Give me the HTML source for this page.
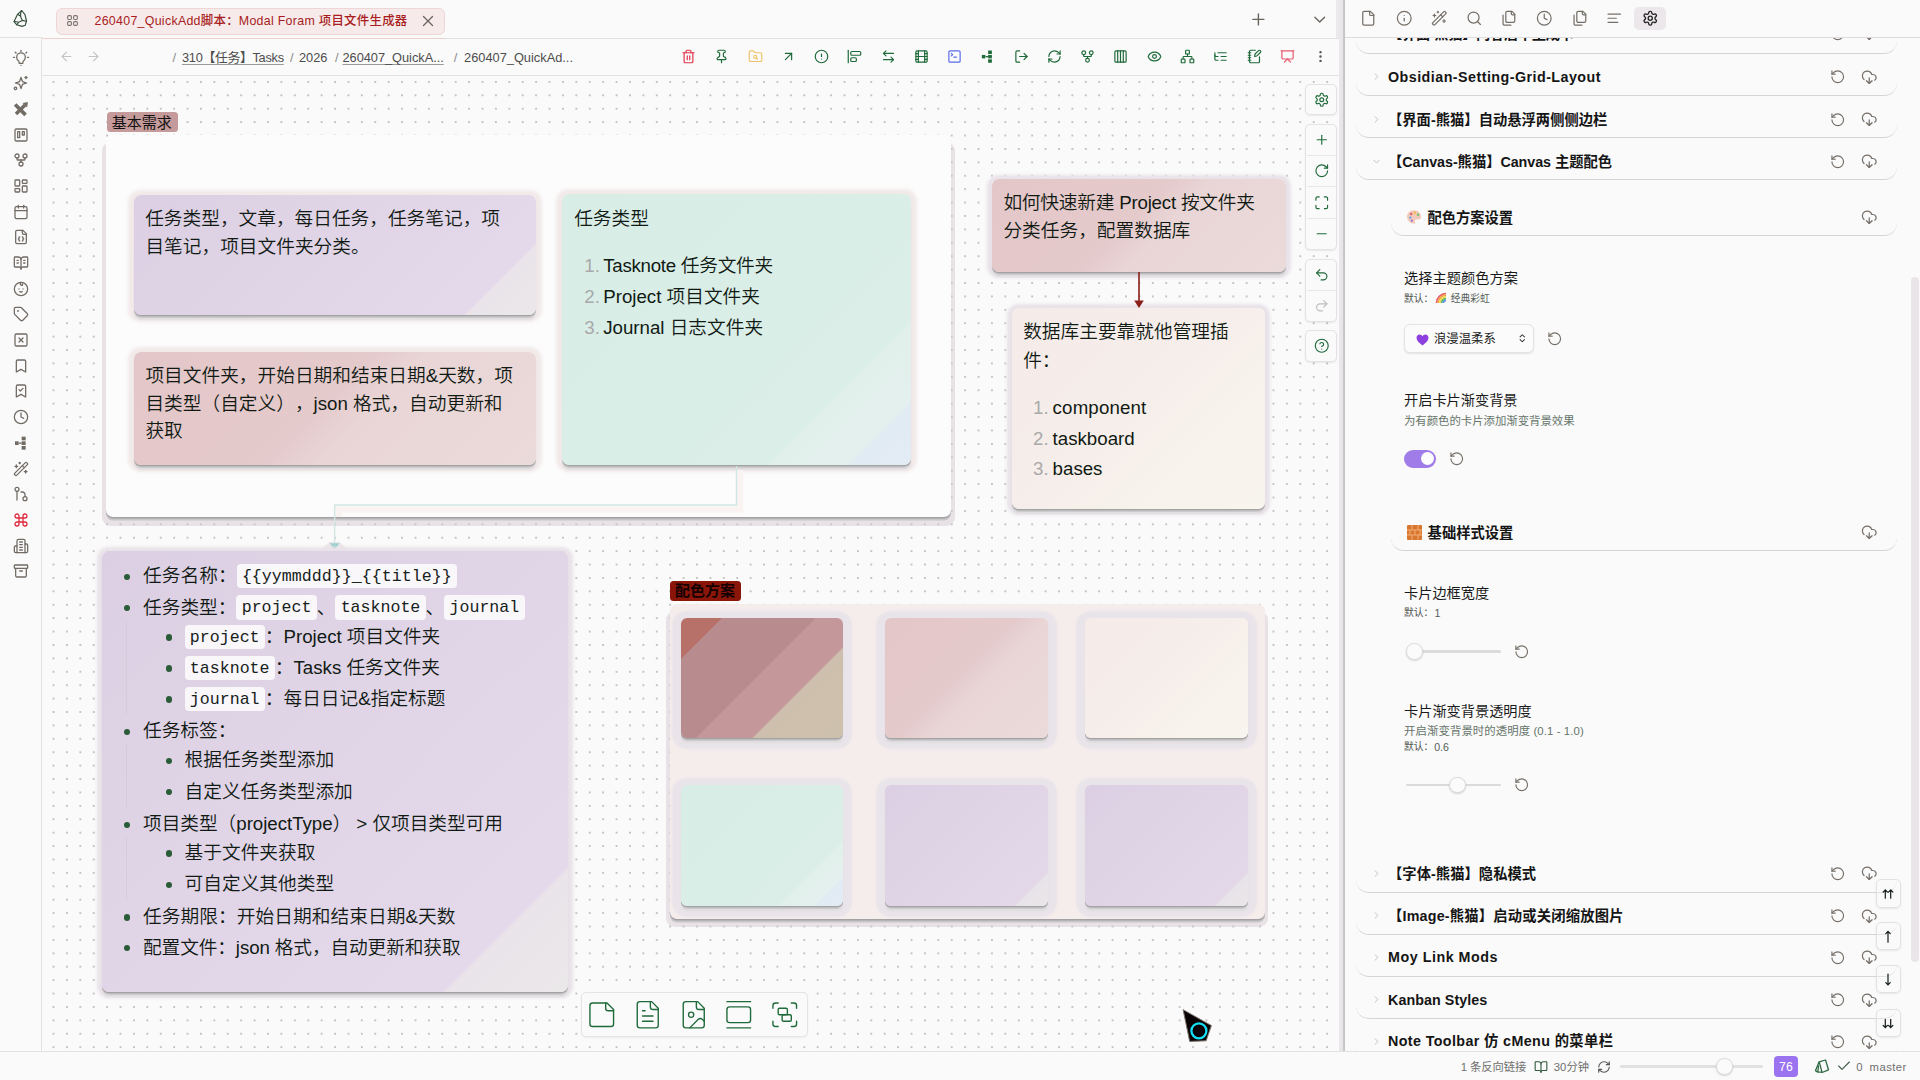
<!DOCTYPE html>
<html lang="zh-CN">
<head>
<meta charset="utf-8">
<title>260407_QuickAdd脚本：Modal Foram 项目文件生成器</title>
<style>
*{box-sizing:border-box;margin:0;padding:0}
html,body{width:1920px;height:1080px;overflow:hidden;background:#fafafa}
body{font-family:"Liberation Sans","Noto Sans CJK SC",sans-serif;color:#222;position:relative;-webkit-font-smoothing:antialiased;text-spacing-trim:space-all}
.abs{position:absolute}
svg.ic{position:absolute;fill:none;stroke:currentColor;stroke-width:2;stroke-linecap:round;stroke-linejoin:round;overflow:visible}
.t{position:absolute;white-space:nowrap;line-height:1}
/* frame */
#ribbon{left:0;top:0;width:42px;height:1051px}
#ribbon-border{left:41px;top:38px;width:1px;height:1013px;background:#e2e2e2}
#ribtop{left:0;top:37px;width:42px;height:1px;background:#e2e2e2}
#topline{left:42px;top:38px;width:1297px;height:1px;background:#e0e0e0}
#headline{left:42px;top:75px;width:1297px;height:1px;background:#e2e2e2}
#canvas{left:42px;top:76px;width:1297px;height:975px;overflow:hidden;background-color:#fafafa;
 background-image:radial-gradient(circle,#8c8c8c 0,#8c8c8c .4px,rgba(140,140,140,0) .95px);background-size:13.41px 13.41px;background-position:4.8px -.8px}
#divider{left:1339px;top:0;width:6.5px;height:1051px;background:linear-gradient(90deg,#ebe8eb 0,#e8e5e8 58%,#c9c7c9 62%,#c4c2c4 100%)}
#divtop{left:1336px;top:0;width:3px;height:38px;background:#ece9ec}
#sidebar{left:1345px;top:0;width:575px;height:1051px;background:#fafafa;overflow:hidden}
#status{left:0;top:1051px;width:1920px;height:29px;background:#fafafa;border-top:1px solid #e2e2e2}
</style>
</head>
<body>
<div class="abs" id="topline"></div><div class="abs" id="ribtop"></div>
<div class="abs" id="ribbon"></div>
<div class="abs" id="ribbon-border"></div>
<div class="abs" id="headline"></div>
<div class="abs" id="canvas">
<div class="abs" style="left:65px;top:35.70px;width:70.50px;height:20.30px;background:#c59a9a;border-radius:3.5px;"></div>
<div class="t" style="left:69.70px;top:36.60px;font-size:15px;line-height:20px;height:20px;color:#111;font-weight:400;">基本需求</div>
<div class="abs" style="left:60.20px;top:66px;width:853px;height:383.80px;background:rgba(214,202,212,.5);border-radius:9px;"></div>
<div class="abs" style="left:64.20px;top:58.50px;width:845px;height:382.50px;background:#fcfcfc;border-radius:7px;box-shadow:0 1.6px 0 #a3a1a3,0 3.5px .5px #c7c5c7;"></div>
<div class="abs" style="left:91.80px;top:119px;width:402.70px;height:120px;background:linear-gradient(135deg,#dccfe3 0%,#e4d9ea 86%,#e9e4e9 86.6%,#ebe8ea 100%);border-radius:7px;box-shadow:0 1.3px 0 rgba(160,158,160,.9),0 2.7px .6px rgba(196,194,196,.9),0 5px 1.5px rgba(222,220,222,.85),0 1px 3.5px 5.5px rgba(242,233,233,1)"></div>
<div class="t c1a" style="left:103.20px;top:128.90px;font-size:18.7px;line-height:28px;height:28px;color:#101a13;font-weight:350;letter-spacing:-0.014px;">任务类型，文章，每日任务，任务笔记，项</div>
<div class="t" style="left:103.40px;top:156.60px;font-size:18.7px;line-height:28px;height:28px;color:#101a13;font-weight:350;">目笔记，项目文件夹分类。</div>
<div class="abs" style="left:91.80px;top:276px;width:402.70px;height:113px;background:linear-gradient(135deg,#e3c6c8 0%,#e5cacc 47%,#e9d5d5 57%,#ebdada 100%);border-radius:7px;box-shadow:0 1.3px 0 rgba(160,158,160,.9),0 2.7px .6px rgba(196,194,196,.9),0 5px 1.5px rgba(222,220,222,.85),0 1px 3.5px 5.5px rgba(242,233,233,1)"></div>
<div class="t" style="left:103.40px;top:286.10px;font-size:18.7px;line-height:28px;height:28px;color:#101a13;font-weight:350;">项目文件夹，开始日期和结束日期&amp;天数，项</div>
<div class="t" style="left:103.40px;top:313.80px;font-size:18.7px;line-height:28px;height:28px;color:#101a13;font-weight:350;">目类型（自定义），json 格式，自动更新和</div>
<div class="t" style="left:103.40px;top:341.40px;font-size:18.7px;line-height:28px;height:28px;color:#101a13;font-weight:350;">获取</div>
<div class="abs" style="left:520px;top:118px;width:349.20px;height:271px;background:linear-gradient(135deg,#d9ede7 0%,#dbeee8 76.500%,#e2f0ec 77.500%,#e3f0ed 89.500%,#e1ebf3 90.100%,#e3ecf4 100%);border-radius:7px;box-shadow:0 1.3px 0 rgba(160,158,160,.9),0 2.7px .6px rgba(196,194,196,.9),0 5px 1.5px rgba(222,220,222,.85),0 1px 3.5px 5.5px rgba(242,233,233,1)"></div>
<div class="t" style="left:532.20px;top:129.30px;font-size:18.7px;line-height:28px;height:28px;color:#101a13;font-weight:350;">任务类型</div>
<div class="t" style="left:542.30px;top:176.30px;font-size:18.7px;line-height:28px;height:28px;color:#a9a9a9;font-weight:350;">1.</div>
<div class="t m0" style="left:561.20px;top:176.30px;font-size:18.7px;line-height:28px;height:28px;color:#101a13;font-weight:350;letter-spacing:-0.260px;">Tasknote 任务文件夹</div>
<div class="t" style="left:542.30px;top:207.30px;font-size:18.7px;line-height:28px;height:28px;color:#a9a9a9;font-weight:350;">2.</div>
<div class="t m1" style="left:561.20px;top:207.30px;font-size:18.7px;line-height:28px;height:28px;color:#101a13;font-weight:350;">Project 项目文件夹</div>
<div class="t" style="left:542.30px;top:238.30px;font-size:18.7px;line-height:28px;height:28px;color:#a9a9a9;font-weight:350;">3.</div>
<div class="t m2" style="left:561.20px;top:238.30px;font-size:18.7px;line-height:28px;height:28px;color:#101a13;font-weight:350;">Journal 日志文件夹</div>
<svg class="abs" style="left:0;top:0;width:1297px;height:975px;overflow:visible" viewBox="0 0 1297 975"><path d="M698 394V433.5H296.5V441" fill="none" stroke="#f9f4f2" stroke-width="6.500"/><path d="M278.5 474l9-8h10l9 8z" fill="#ece6ea"/><path d="M694.5 390V429H292.6V468" fill="none" stroke="#cfe6e3" stroke-width="1.4"/><path d="M287.8 467.20000000000005h9.700l-4.850 6.800z" fill="#9fd0cf"/></svg>
<div class="abs" style="left:950px;top:102.80px;width:294px;height:93.20px;background:linear-gradient(135deg,#e3c6c8 0%,#e5cacc 47%,#e9d5d5 57%,#ebdada 100%);border-radius:7px;box-shadow:0 1.3px 0 rgba(160,158,160,.9),0 2.7px .6px rgba(196,194,196,.9),0 5px 1.5px rgba(222,220,222,.85),0 1px 3px 4.5px rgba(233,227,233,1)"></div>
<div class="t r1" style="left:961.40px;top:113px;font-size:18.7px;line-height:28px;height:28px;color:#101a13;font-weight:350;letter-spacing:-0.212px;">如何快速新建 Project 按文件夹</div>
<div class="t" style="left:961.40px;top:141.30px;font-size:18.7px;line-height:28px;height:28px;color:#101a13;font-weight:350;">分类任务，配置数据库</div>
<div class="abs" style="left:970px;top:232.20px;width:253px;height:200.40px;background:linear-gradient(135deg,#f5ebe9 0%,#f6eeea 50%,#f7f2ec 70%,#f8f4ee 100%);border-radius:7px;box-shadow:0 1.3px 0 rgba(160,158,160,.9),0 2.7px .6px rgba(196,194,196,.9),0 5px 1.5px rgba(222,220,222,.85),0 1px 3px 4.5px rgba(233,227,233,1)"></div>
<div class="t" style="left:981.20px;top:242px;font-size:18.7px;line-height:28px;height:28px;color:#101a13;font-weight:350;">数据库主要靠就他管理插</div>
<div class="t" style="left:981.20px;top:270.60px;font-size:18.7px;line-height:28px;height:28px;color:#101a13;font-weight:350;">件：</div>
<div class="t" style="left:991px;top:317.60px;font-size:18.7px;line-height:28px;height:28px;color:#a9a9a9;font-weight:350;">1.</div>
<div class="t q0" style="left:1010.60px;top:317.60px;font-size:18.7px;line-height:28px;height:28px;color:#101a13;font-weight:350;letter-spacing:0.148px;">component</div>
<div class="t" style="left:991px;top:348.50px;font-size:18.7px;line-height:28px;height:28px;color:#a9a9a9;font-weight:350;">2.</div>
<div class="t q1" style="left:1010.60px;top:348.50px;font-size:18.7px;line-height:28px;height:28px;color:#101a13;font-weight:350;">taskboard</div>
<div class="t" style="left:991px;top:379.40px;font-size:18.7px;line-height:28px;height:28px;color:#a9a9a9;font-weight:350;">3.</div>
<div class="t q2" style="left:1010.60px;top:379.40px;font-size:18.7px;line-height:28px;height:28px;color:#101a13;font-weight:350;">bases</div>
<svg class="abs" style="left:0;top:0;width:1297px;height:975px;overflow:visible" viewBox="0 0 1297 975"><path d="M1097 196V225" stroke="#8b1f1b" stroke-width="1.600" fill="none"/><path d="M1092.2 224.5h9.600l-4.800 7.600z" fill="#8b1f1b"/></svg>
<div class="abs" style="left:60px;top:474.80px;width:466px;height:441.70px;background:linear-gradient(135deg,#dccfe3 0%,#e4d9ea 86%,#e9e4e9 86.6%,#ebe8ea 100%);border-radius:7px;box-shadow:0 1.3px 0 rgba(160,158,160,.9),0 2.7px .6px rgba(196,194,196,.9),0 5px 1.5px rgba(222,220,222,.85),0 1px 3px 4.5px rgba(233,227,233,1)"></div>
<div class="abs" style="left:81.60px;top:497.60px;width:6.40px;height:6.40px;background:#2a5c38;border-radius:50%;"></div>
<div class="t li0" style="left:101px;top:486.20px;font-size:18.7px;line-height:28px;height:28px;color:#101a13;font-weight:350;letter-spacing:0.036px;">任务名称：<span style="font-family:'Liberation Mono',monospace;font-size:16.6px;font-weight:400;background:#faf7fa;border-radius:4px;padding:2.5px 5.25px 3px;color:#16221a;position:relative;top:-1.8px;">{{yymmddd}}_{{title}}</span></div>
<div class="abs" style="left:81.60px;top:528.90px;width:6.40px;height:6.40px;background:#2a5c38;border-radius:50%;"></div>
<div class="t li1" style="left:101px;top:517.50px;font-size:18.7px;line-height:28px;height:28px;color:#101a13;font-weight:350;letter-spacing:0.002px;">任务类型：<span style="font-family:'Liberation Mono',monospace;font-size:16.6px;font-weight:400;background:#faf7fa;border-radius:4px;padding:2.5px 5.25px 3px;color:#16221a;position:relative;top:-1.8px;">project</span>、<span style="font-family:'Liberation Mono',monospace;font-size:16.6px;font-weight:400;background:#faf7fa;border-radius:4px;padding:2.5px 5.25px 3px;color:#16221a;position:relative;top:-1.8px;">tasknote</span>、<span style="font-family:'Liberation Mono',monospace;font-size:16.6px;font-weight:400;background:#faf7fa;border-radius:4px;padding:2.5px 5.25px 3px;color:#16221a;position:relative;top:-1.8px;">journal</span></div>
<div class="abs" style="left:123.60px;top:558.40px;width:6.40px;height:6.40px;background:#2a5c38;border-radius:50%;"></div>
<div class="t li2" style="left:142.60px;top:547px;font-size:18.7px;line-height:28px;height:28px;color:#101a13;font-weight:350;"><span style="font-family:'Liberation Mono',monospace;font-size:16.6px;font-weight:400;background:#faf7fa;border-radius:4px;padding:2.5px 5.25px 3px;color:#16221a;position:relative;top:-1.8px;">project</span>：Project 项目文件夹</div>
<div class="abs" style="left:123.60px;top:589.40px;width:6.40px;height:6.40px;background:#2a5c38;border-radius:50%;"></div>
<div class="t li3" style="left:142.60px;top:578px;font-size:18.7px;line-height:28px;height:28px;color:#101a13;font-weight:350;"><span style="font-family:'Liberation Mono',monospace;font-size:16.6px;font-weight:400;background:#faf7fa;border-radius:4px;padding:2.5px 5.25px 3px;color:#16221a;position:relative;top:-1.8px;">tasknote</span>：Tasks 任务文件夹</div>
<div class="abs" style="left:123.60px;top:620.20px;width:6.40px;height:6.40px;background:#2a5c38;border-radius:50%;"></div>
<div class="t li4" style="left:142.60px;top:608.80px;font-size:18.7px;line-height:28px;height:28px;color:#101a13;font-weight:350;"><span style="font-family:'Liberation Mono',monospace;font-size:16.6px;font-weight:400;background:#faf7fa;border-radius:4px;padding:2.5px 5.25px 3px;color:#16221a;position:relative;top:-1.8px;">journal</span>：每日日记&amp;指定标题</div>
<div class="abs" style="left:81.60px;top:652.60px;width:6.40px;height:6.40px;background:#2a5c38;border-radius:50%;"></div>
<div class="t li5" style="left:101px;top:641.20px;font-size:18.7px;line-height:28px;height:28px;color:#101a13;font-weight:350;">任务标签：</div>
<div class="abs" style="left:123.60px;top:681.80px;width:6.40px;height:6.40px;background:#2a5c38;border-radius:50%;"></div>
<div class="t li6" style="left:142.60px;top:670.40px;font-size:18.7px;line-height:28px;height:28px;color:#101a13;font-weight:350;">根据任务类型添加</div>
<div class="abs" style="left:123.60px;top:713.10px;width:6.40px;height:6.40px;background:#2a5c38;border-radius:50%;"></div>
<div class="t li7" style="left:142.60px;top:701.70px;font-size:18.7px;line-height:28px;height:28px;color:#101a13;font-weight:350;">自定义任务类型添加</div>
<div class="abs" style="left:81.60px;top:745.60px;width:6.40px;height:6.40px;background:#2a5c38;border-radius:50%;"></div>
<div class="t li8" style="left:101px;top:734.20px;font-size:18.7px;line-height:28px;height:28px;color:#101a13;font-weight:350;letter-spacing:-0.032px;">项目类型（projectType） &gt; 仅项目类型可用</div>
<div class="abs" style="left:123.60px;top:774.20px;width:6.40px;height:6.40px;background:#2a5c38;border-radius:50%;"></div>
<div class="t li9" style="left:142.60px;top:762.80px;font-size:18.7px;line-height:28px;height:28px;color:#101a13;font-weight:350;">基于文件夹获取</div>
<div class="abs" style="left:123.60px;top:805.60px;width:6.40px;height:6.40px;background:#2a5c38;border-radius:50%;"></div>
<div class="t li10" style="left:142.60px;top:794.20px;font-size:18.7px;line-height:28px;height:28px;color:#101a13;font-weight:350;">可自定义其他类型</div>
<div class="abs" style="left:81.60px;top:838.40px;width:6.40px;height:6.40px;background:#2a5c38;border-radius:50%;"></div>
<div class="t li11" style="left:101px;top:827px;font-size:18.7px;line-height:28px;height:28px;color:#101a13;font-weight:350;letter-spacing:0.060px;">任务期限：开始日期和结束日期&amp;天数</div>
<div class="abs" style="left:81.60px;top:868.90px;width:6.40px;height:6.40px;background:#2a5c38;border-radius:50%;"></div>
<div class="t li12" style="left:101px;top:857.50px;font-size:18.7px;line-height:28px;height:28px;color:#101a13;font-weight:350;letter-spacing:-0.115px;">配置文件：json 格式，自动更新和获取</div>
<div class="abs" style="left:84.40px;top:546px;width:1px;height:92px;background:#d5c9db;"></div>
<div class="abs" style="left:84.40px;top:669px;width:1px;height:62px;background:#d5c9db;"></div>
<div class="abs" style="left:84.40px;top:762px;width:1px;height:62px;background:#d5c9db;"></div>
<div class="abs" style="left:628px;top:505.20px;width:70.80px;height:19.60px;background:#8a1509;border-radius:3.5px;"></div>
<div class="t" style="left:633px;top:505.20px;font-size:15px;line-height:20px;height:20px;color:#140202;font-weight:700;">配色方案</div>
<div class="abs" style="left:624.40px;top:535px;width:601.40px;height:316px;background:rgba(214,202,212,.5);border-radius:9px;"></div>
<div class="abs" style="left:627.60px;top:527.80px;width:595.20px;height:315px;background:#f5edec;border-radius:7px;box-shadow:0 1.6px 0 #a3a1a3,0 3.5px .5px #c7c5c7;"></div>
<div class="abs" style="left:638.80px;top:542px;width:161.80px;height:120px;background:linear-gradient(135deg,#b77168 0%,#b77168 14.3%,#b88b8e 14.8%,#b88b8e 47.5%,#c4989b 48.2%,#c4989b 67.6%,#cdbfab 68.3%,#cdc0ac 100%);border-radius:6px;box-shadow:0 1.3px 0 rgba(160,158,160,.9),0 2.7px .6px rgba(196,194,196,.9),0 5px 1.5px rgba(222,220,222,.85),0 2px 2px 9px rgba(233,228,233,1)"></div>
<div class="abs" style="left:843px;top:542px;width:162.60px;height:120px;background:linear-gradient(135deg,#e3c6c8 0%,#e5cacc 47%,#e9d5d5 57%,#ebdada 100%);border-radius:6px;box-shadow:0 1.3px 0 rgba(160,158,160,.9),0 2.7px .6px rgba(196,194,196,.9),0 5px 1.5px rgba(222,220,222,.85),0 2px 2px 9px rgba(233,228,233,1)"></div>
<div class="abs" style="left:1043px;top:542px;width:163.40px;height:120px;background:linear-gradient(135deg,#f5ebe9 0%,#f6eeea 50%,#f7f2ec 70%,#f8f4ee 100%);border-radius:6px;box-shadow:0 1.3px 0 rgba(160,158,160,.9),0 2.7px .6px rgba(196,194,196,.9),0 5px 1.5px rgba(222,220,222,.85),0 2px 2px 9px rgba(233,228,233,1)"></div>
<div class="abs" style="left:638.80px;top:709.20px;width:161.80px;height:120.80px;background:linear-gradient(135deg,#d9ede7 0%,#dbeee8 76.500%,#e2f0ec 77.500%,#e3f0ed 89.500%,#e1ebf3 90.100%,#e3ecf4 100%);border-radius:6px;box-shadow:0 1.3px 0 rgba(160,158,160,.9),0 2.7px .6px rgba(196,194,196,.9),0 5px 1.5px rgba(222,220,222,.85),0 2px 2px 9px rgba(233,228,233,1)"></div>
<div class="abs" style="left:843px;top:709.20px;width:162.60px;height:120.80px;background:linear-gradient(135deg,#dccfe3 0%,#e3d8e9 88%,#e8e3e8 88.6%,#eae7e9 100%);border-radius:6px;box-shadow:0 1.3px 0 rgba(160,158,160,.9),0 2.7px .6px rgba(196,194,196,.9),0 5px 1.5px rgba(222,220,222,.85),0 2px 2px 9px rgba(233,228,233,1)"></div>
<div class="abs" style="left:1043px;top:709.20px;width:163.40px;height:120.80px;background:linear-gradient(135deg,#dccfe3 0%,#e3d8e9 88%,#e8e3e8 88.6%,#eae7e9 100%);border-radius:6px;box-shadow:0 1.3px 0 rgba(160,158,160,.9),0 2.7px .6px rgba(196,194,196,.9),0 5px 1.5px rgba(222,220,222,.85),0 2px 2px 9px rgba(233,228,233,1)"></div>
<div class="abs" style="left:538.60px;top:915.80px;width:227px;height:44.90px;background:#fafafa;border:1px solid #e6e4e6;border-radius:5px;box-shadow:0 1px 2px rgba(0,0,0,.06);"></div>
<svg class="ic" viewBox="0 0 24 24" style="left:544.25px;top:922.95px;width:31.5px;height:31.5px;color:#1f6a3a;stroke-width:1.05;"><path d="M16 3H5a2 2 0 0 0-2 2v14a2 2 0 0 0 2 2h14a2 2 0 0 0 2-2V8Z"/><path d="M15 3v4a2 2 0 0 0 2 2h4"/></svg>
<svg class="ic" viewBox="0 0 24 24" style="left:590.45px;top:922.95px;width:31.5px;height:31.5px;color:#1f6a3a;stroke-width:1.05;"><path d="M15 2H6a2 2 0 0 0-2 2v16a2 2 0 0 0 2 2h12a2 2 0 0 0 2-2V7Z"/><path d="M14 2v4a2 2 0 0 0 2 2h4"/><path d="M10 9H8"/><path d="M16 13H8"/><path d="M16 17H8"/></svg>
<svg class="ic" viewBox="0 0 24 24" style="left:635.65px;top:922.95px;width:31.5px;height:31.5px;color:#1f6a3a;stroke-width:1.05;"><path d="M15 2H6a2 2 0 0 0-2 2v16a2 2 0 0 0 2 2h12a2 2 0 0 0 2-2V7Z"/><path d="M14 2v4a2 2 0 0 0 2 2h4"/><circle cx="10" cy="12" r="2"/><path d="m20 17-1.296-1.296a2.410 2.410 0 0 0-3.408 0L9 22"/></svg>
<svg class="ic" viewBox="0 0 24 24" style="left:681.35px;top:922.95px;width:31.5px;height:31.5px;color:#1f6a3a;stroke-width:1.05;"><path d="M3 2h18"/><rect width="18" height="12" x="3" y="6" rx="2"/><path d="M3 22h18"/></svg>
<svg class="ic" viewBox="0 0 24 24" style="left:727.35px;top:922.95px;width:31.5px;height:31.5px;color:#1f6a3a;stroke-width:1.05;"><path d="M3 7V5c0-1.100.900-2 2-2h2"/><path d="M17 3h2c1.100 0 2 .900 2 2v2"/><path d="M21 17v2c0 1.100-.900 2-2 2h-2"/><path d="M7 21H5c-1.100 0-2-.900-2-2v-2"/><rect width="7" height="5" x="7" y="7" rx="1"/><rect width="7" height="5" x="10" y="12" rx="1"/></svg>
<div class="abs" style="left:1263.30px;top:8.30px;width:32.20px;height:30.90px;background:#fafafa;border:1px solid #e4e2e4;border-radius:5px;box-shadow:0 1px 2px rgba(0,0,0,.07);"></div><svg class="ic" viewBox="0 0 24 24" style="left:1271.75px;top:16px;width:15.5px;height:15.5px;color:#1f6a3a;stroke-width:1.8;"><path d="M12.22 2h-.44a2 2 0 0 0-2 2v.18a2 2 0 0 1-1 1.73l-.43.25a2 2 0 0 1-2 0l-.15-.08a2 2 0 0 0-2.73.73l-.22.38a2 2 0 0 0 .73 2.73l.15.1a2 2 0 0 1 1 1.72v.51a2 2 0 0 1-1 1.74l-.15.09a2 2 0 0 0-.73 2.73l.22.38a2 2 0 0 0 2.73.73l.15-.08a2 2 0 0 1 2 0l.43.25a2 2 0 0 1 1 1.73V20a2 2 0 0 0 2 2h.44a2 2 0 0 0 2-2v-.18a2 2 0 0 1 1-1.73l.43-.25a2 2 0 0 1 2 0l.15.08a2 2 0 0 0 2.73-.73l.22-.39a2 2 0 0 0-.73-2.73l-.15-.08a2 2 0 0 1-1-1.74v-.5a2 2 0 0 1 1-1.74l.15-.09a2 2 0 0 0 .73-2.73l-.22-.38a2 2 0 0 0-2.73-.73l-.15.08a2 2 0 0 1-2 0l-.43-.25a2 2 0 0 1-1-1.73V4a2 2 0 0 0-2-2z"/><circle cx="12" cy="12" r="3"/></svg>
<div class="abs" style="left:1263.30px;top:47.50px;width:32.20px;height:126.50px;background:#fafafa;border:1px solid #e4e2e4;border-radius:5px;box-shadow:0 1px 2px rgba(0,0,0,.07);"></div><svg class="ic" viewBox="0 0 24 24" style="left:1271.75px;top:55.56px;width:15.5px;height:15.5px;color:#1f6a3a;stroke-width:1.8;"><path d="M5 12h14"/><path d="M12 5v14"/></svg><svg class="ic" viewBox="0 0 24 24" style="left:1271.75px;top:87.19px;width:15.5px;height:15.5px;color:#1f6a3a;stroke-width:1.8;"><path d="M21 12a9 9 0 1 1-9-9c2.52 0 4.93 1 6.74 2.74L21 8"/><path d="M21 3v5h-5"/></svg><div class="abs" style="left:1264.50px;top:78.62px;width:30px;height:1px;background:#e8e6e8;"></div><svg class="ic" viewBox="0 0 24 24" style="left:1271.75px;top:118.81px;width:15.5px;height:15.5px;color:#1f6a3a;stroke-width:1.8;"><path d="M8 3H5a2 2 0 0 0-2 2v3"/><path d="M21 8V5a2 2 0 0 0-2-2h-3"/><path d="M3 16v3a2 2 0 0 0 2 2h3"/><path d="M16 21h3a2 2 0 0 0 2-2v-3"/></svg><div class="abs" style="left:1264.50px;top:110.25px;width:30px;height:1px;background:#e8e6e8;"></div><svg class="ic" viewBox="0 0 24 24" style="left:1271.75px;top:150.44px;width:15.5px;height:15.5px;color:#1f6a3a;stroke-width:1.8;"><path d="M5 12h14"/></svg><div class="abs" style="left:1264.50px;top:141.88px;width:30px;height:1px;background:#e8e6e8;"></div>
<div class="abs" style="left:1263.30px;top:182.50px;width:32.20px;height:63px;background:#fafafa;border:1px solid #e4e2e4;border-radius:5px;box-shadow:0 1px 2px rgba(0,0,0,.07);"></div><svg class="ic" viewBox="0 0 24 24" style="left:1271.75px;top:190.50px;width:15.5px;height:15.5px;color:#1f6a3a;stroke-width:1.8;"><path d="M9 14 4 9l5-5"/><path d="M4 9h10.5a5.5 5.5 0 0 1 5.5 5.5a5.5 5.5 0 0 1-5.5 5.5H11"/></svg><svg class="ic" viewBox="0 0 24 24" style="left:1271.75px;top:222px;width:15.5px;height:15.5px;color:#b9bdb9;stroke-width:1.8;"><path d="m15 14 5-5-5-5"/><path d="M20 9H9.500A5.500 5.500 0 0 0 4 14.500A5.500 5.500 0 0 0 9.500 20H13"/></svg><div class="abs" style="left:1264.50px;top:213.50px;width:30px;height:1px;background:#e8e6e8;"></div>
<div class="abs" style="left:1263.30px;top:254px;width:32.20px;height:31.50px;background:#fafafa;border:1px solid #e4e2e4;border-radius:5px;box-shadow:0 1px 2px rgba(0,0,0,.07);"></div><svg class="ic" viewBox="0 0 24 24" style="left:1271.75px;top:262px;width:15.5px;height:15.5px;color:#1f6a3a;stroke-width:1.8;"><circle cx="12" cy="12" r="10"/><path d="M9.09 9a3 3 0 0 1 5.83 1c0 2-3 3-3 3"/><path d="M12 17h.01"/></svg>
<svg class="abs" style="left:0;top:0;width:1297px;height:975px;overflow:visible" viewBox="0 0 1297 975"><path d="M1141.1 933.7L1169.4 949.6L1164.1 964.8L1147.7 965.4Z" fill="#0a0305" stroke="#7d746c" stroke-width="1" stroke-linejoin="miter"/><circle cx="1156.9" cy="954.8" r="7.500" fill="none" stroke="#12def4" stroke-width="2.300"/></svg>
</div>
<svg class="abs" style="left:0;top:0;width:42px;height:37px;overflow:visible" viewBox="0 0 42 37" fill="none" stroke="#35503d" stroke-width="1.150" stroke-linejoin="round" stroke-linecap="round"><path d="M21.700 10.500L17.600 14.300L14 21.600L16.800 24.800L22 26.400L25.300 25.200L26.500 21L25 14.600Z"/><path d="M21.700 10.500C20 13.500 20.200 17.200 22.400 20.400L26.300 21.300M22.400 20.400L18.600 22.200L16.800 24.800M18.600 22.200L14.300 21.300M17.600 14.300L20.300 16"/></svg>
<svg class="ic" viewBox="0 0 24 24" style="left:12.80px;top:49.50px;width:16px;height:16px;color:#716b64;stroke-width:1.9;"><path d="M8.800 16.800c-2-1.300-3.300-3.500-3.300-6a6.500 6.500 0 0 1 13 0c0 2.500-1.300 4.700-3.300 6l-.600 3.400H9.400z"/><path d="M12 23.200h.01"/><path d="M12 .600v1.600"/><path d="M3.400 3.400l1.200 1.200"/><path d="M20.600 3.400l-1.200 1.200"/><path d="M.600 11h1.700"/><path d="M21.700 11h1.700"/></svg>
<svg class="ic" viewBox="0 0 24 24" style="left:12.80px;top:75.19px;width:16px;height:16px;color:#716b64;stroke-width:1.9;"><path d="m12 3.500-1.800 5.400a2 2 0 0 1-1.275 1.275L3.500 12l5.400 1.800a2 2 0 0 1 1.275 1.275L12 20.500l1.800-5.400a2 2 0 0 1 1.275-1.275L20.500 12l-5.400-1.800a2 2 0 0 1-1.275-1.275z"/><path d="M19.500 2v3.600"/><path d="M21.300 3.800h-3.600"/><circle cx="3.800" cy="20" r="1.900"/></svg>
<svg class="ic" viewBox="0 0 24 24" style="left:12.80px;top:100.88px;width:16px;height:16px;color:#716b64;stroke-width:1.9;"><g stroke-width="5.400" stroke-linecap="butt"><path d="M3.200 5.200l15.600 15.600"/><path d="M18 6L4.500 19.500"/></g><path d="M15.500 3.200L21.800 2.200L20.800 8.500z" fill="currentColor" stroke-width="1"/></svg>
<svg class="ic" viewBox="0 0 24 24" style="left:12.80px;top:126.57px;width:16px;height:16px;color:#716b64;stroke-width:1.9;"><rect width="18" height="18" x="3" y="3" rx="2"/><rect width="3" height="9" x="7" y="7"/><rect width="3" height="5" x="14" y="7"/></svg>
<svg class="ic" viewBox="0 0 24 24" style="left:12.80px;top:152.26px;width:16px;height:16px;color:#716b64;stroke-width:1.9;"><circle cx="12" cy="18" r="3"/><circle cx="6" cy="6" r="3"/><circle cx="18" cy="6" r="3"/><path d="M18 9v2c0 .6-.4 1-1 1H7c-.6 0-1-.4-1-1V9"/><path d="M12 12v3"/></svg>
<svg class="ic" viewBox="0 0 24 24" style="left:12.80px;top:177.95px;width:16px;height:16px;color:#716b64;stroke-width:1.9;"><rect width="7" height="9" x="3" y="3" rx="1"/><rect width="7" height="5" x="14" y="3" rx="1"/><rect width="7" height="9" x="14" y="12" rx="1"/><rect width="7" height="5" x="3" y="16" rx="1"/></svg>
<svg class="ic" viewBox="0 0 24 24" style="left:12.80px;top:203.64px;width:16px;height:16px;color:#716b64;stroke-width:1.9;"><path d="M8 2v4"/><path d="M16 2v4"/><rect width="18" height="18" x="3" y="4" rx="2"/><path d="M3 10h18"/></svg>
<svg class="ic" viewBox="0 0 24 24" style="left:12.80px;top:229.33px;width:16px;height:16px;color:#716b64;stroke-width:1.9;"><path d="M15 2H6a2 2 0 0 0-2 2v16a2 2 0 0 0 2 2h12a2 2 0 0 0 2-2V7Z"/><path d="M14 2v4a2 2 0 0 0 2 2h4"/><path d="M10 12a1 1 0 0 0-1 1v1a1 1 0 0 1-1 1 1 1 0 0 1 1 1v1a1 1 0 0 0 1 1"/><path d="M14 18a1 1 0 0 0 1-1v-1a1 1 0 0 1 1-1 1 1 0 0 1-1-1v-1a1 1 0 0 0-1-1"/></svg>
<svg class="ic" viewBox="0 0 24 24" style="left:12.80px;top:255.02px;width:16px;height:16px;color:#716b64;stroke-width:1.9;"><path d="M12 7v14"/><path d="M16 12h2"/><path d="M16 8h2"/><path d="M3 18a1 1 0 0 1-1-1V4a1 1 0 0 1 1-1h5a4 4 0 0 1 4 4 4 4 0 0 1 4-4h5a1 1 0 0 1 1 1v13a1 1 0 0 1-1 1h-6a3 3 0 0 0-3 3 3 3 0 0 0-3-3z"/><path d="M6 12h2"/><path d="M6 8h2"/></svg>
<svg class="ic" viewBox="0 0 24 24" style="left:12.80px;top:280.71px;width:16px;height:16px;color:#716b64;stroke-width:1.9;"><circle cx="12" cy="12" r="10"/><path d="M9 12h.01"/><path d="M15 12h.01"/><path d="M10 16c.5.300 1.200.500 2 .500s1.500-.200 2-.500"/><path d="M12 2c-1.500 1.500-1.500 3.500.500 4.500 1.500.500 2.500-1 1.500-2"/></svg>
<svg class="ic" viewBox="0 0 24 24" style="left:12.80px;top:306.40px;width:16px;height:16px;color:#716b64;stroke-width:1.9;"><path d="M12.586 2.586A2 2 0 0 0 11.172 2H4a2 2 0 0 0-2 2v7.172a2 2 0 0 0 .586 1.414l8.704 8.704a2.426 2.426 0 0 0 3.420 0l6.580-6.580a2.426 2.426 0 0 0 0-3.420z"/><circle cx="7.500" cy="7.500" r=".5" fill="currentColor"/></svg>
<svg class="ic" viewBox="0 0 24 24" style="left:12.80px;top:332.09px;width:16px;height:16px;color:#716b64;stroke-width:1.9;"><rect width="18" height="18" x="3" y="3" rx="2"/><path d="m15 9-6 6"/><path d="m9 9 6 6"/></svg>
<svg class="ic" viewBox="0 0 24 24" style="left:12.80px;top:357.78px;width:16px;height:16px;color:#716b64;stroke-width:1.9;"><path d="m19 21-7-4-7 4V5a2 2 0 0 1 2-2h10a2 2 0 0 1 2 2v16z"/></svg>
<svg class="ic" viewBox="0 0 24 24" style="left:12.80px;top:383.47px;width:16px;height:16px;color:#716b64;stroke-width:1.9;"><path d="m19 21-7-4-7 4V5a2 2 0 0 1 2-2h10a2 2 0 0 1 2 2v16z"/><path d="m9 10 2 2 4-4"/></svg>
<svg class="ic" viewBox="0 0 24 24" style="left:12.80px;top:409.16px;width:16px;height:16px;color:#716b64;stroke-width:1.9;"><circle cx="12" cy="12" r="10"/><path d="M12 6v6l4 2"/></svg>
<svg class="ic" viewBox="0 0 24 24" style="left:12.80px;top:434.85px;width:16px;height:16px;color:#716b64;stroke-width:1.9;"><g fill="currentColor" stroke="none"><rect x="3" y="9.5" width="5.5" height="5.5"/><rect x="9" y="11.2" width="4" height="2"/><rect x="13" y="2.5" width="6" height="5.5"/><rect x="13" y="9.5" width="6" height="5.5"/><rect x="13" y="16.5" width="6" height="5.5"/></g></svg>
<svg class="ic" viewBox="0 0 24 24" style="left:12.80px;top:460.54px;width:16px;height:16px;color:#716b64;stroke-width:1.9;"><path d="m21.64 3.64-1.28-1.28a1.21 1.21 0 0 0-1.72 0L2.36 18.64a1.21 1.21 0 0 0 0 1.72l1.28 1.28a1.2 1.2 0 0 0 1.72 0L21.64 5.36a1.2 1.2 0 0 0 0-1.72"/><path d="m14 7 3 3"/><path d="M5 6v4"/><path d="M19 14v4"/><path d="M10 2v2"/><path d="M7 8H3"/><path d="M21 16h-4"/><path d="M11 3H9"/></svg>
<svg class="ic" viewBox="0 0 24 24" style="left:12.80px;top:486.23px;width:16px;height:16px;color:#716b64;stroke-width:1.9;"><circle cx="6" cy="5" r="3"/><path d="M6 8v13"/><circle cx="18" cy="19" r="3"/><path d="M18 16v-3a4 4 0 0 0-4-4h-2"/></svg>
<svg class="ic" viewBox="0 0 24 24" style="left:12.80px;top:511.92px;width:16px;height:16px;color:#e0283c;stroke-width:1.9;"><path d="M15 6v12a3 3 0 1 0 3-3H6a3 3 0 1 0 3 3V6a3 3 0 1 0-3 3h12a3 3 0 1 0-3-3"/></svg>
<svg class="ic" viewBox="0 0 24 24" style="left:12.80px;top:537.61px;width:16px;height:16px;color:#716b64;stroke-width:1.9;"><path d="M6 22V4a2 2 0 0 1 2-2h8a2 2 0 0 1 2 2v18Z"/><path d="M6 12H4a2 2 0 0 0-2 2v6a2 2 0 0 0 2 2h2"/><path d="M18 9h2a2 2 0 0 1 2 2v9a2 2 0 0 1-2 2h-2"/><path d="M10 6h4"/><path d="M10 10h4"/><path d="M10 14h4"/><path d="M10 18h4"/></svg>
<svg class="ic" viewBox="0 0 24 24" style="left:12.80px;top:563.30px;width:16px;height:16px;color:#716b64;stroke-width:1.9;"><rect width="20" height="5" x="2" y="3" rx="1"/><path d="M4 8v11a2 2 0 0 0 2 2h12a2 2 0 0 0 2-2V8"/><path d="M10 12h4"/></svg>
<div class="abs" style="left:42px;top:38px;width:403px;height:1px;background:#ecd0d0"></div>
<div class="abs" style="left:56px;top:8px;width:388.800px;height:26.700px;border:1px solid #eed6d6;border-radius:6px;background:#f6ebea"></div>
<svg class="ic" viewBox="0 0 24 24" style="left:66px;top:14.20px;width:13px;height:13px;color:#7a746e;stroke-width:2;"><rect width="7" height="7" x="3" y="3" rx="2"/><rect width="7" height="7" x="14" y="3" rx="2"/><rect width="7" height="7" x="14" y="14" rx="2"/><rect width="7" height="7" x="3" y="14" rx="2"/></svg>
<div class="t tabt" style="left:94.50px;top:12.50px;font-size:12.4px;line-height:17px;height:17px;color:#a81c22;font-weight:500;letter-spacing:0.289px;">260407_QuickAdd脚本：Modal Foram 项目文件生成器</div>
<svg class="ic" viewBox="0 0 24 24" style="left:419.40px;top:11.70px;width:18px;height:18px;color:#6b655e;stroke-width:1.75;"><path d="M18 6 6 18"/><path d="m6 6 12 12"/></svg>
<svg class="ic" viewBox="0 0 24 24" style="left:1249.20px;top:10.10px;width:18.8px;height:18.8px;color:#6b655e;stroke-width:1.8;"><path d="M5 12h14"/><path d="M12 5v14"/></svg>
<svg class="ic" viewBox="0 0 24 24" style="left:1309.80px;top:9.60px;width:19.4px;height:19.4px;color:#6b655e;stroke-width:1.75;"><path d="m6 9 6 6 6-6"/></svg>
<svg class="ic" viewBox="0 0 24 24" style="left:59px;top:49.10px;width:15px;height:15px;color:#c4c4c4;stroke-width:1.8;"><path d="m12 19-7-7 7-7"/><path d="M19 12H5"/></svg>
<svg class="ic" viewBox="0 0 24 24" style="left:86px;top:49.10px;width:15px;height:15px;color:#c4c4c4;stroke-width:1.8;"><path d="M5 12h14"/><path d="m12 5 7 7-7 7"/></svg>
<div class="t" style="left:172.50px;top:49.20px;font-size:12.8px;line-height:18px;height:18px;color:#8a8a8a;">/</div>
<div class="t bc1" style="left:182px;top:49.20px;font-size:12.8px;line-height:18px;height:18px;color:#4d4d4d;text-decoration:underline;text-decoration-color:#9a9a9a;text-underline-offset:2px;letter-spacing:-0.292px;">310【任务】Tasks</div>
<div class="t" style="left:290px;top:49.20px;font-size:12.8px;line-height:18px;height:18px;color:#8a8a8a;">/</div>
<div class="t bc2" style="left:299px;top:49.20px;font-size:12.8px;line-height:18px;height:18px;color:#4d4d4d;letter-spacing:0.004px;">2026</div>
<div class="t" style="left:335px;top:49.20px;font-size:12.8px;line-height:18px;height:18px;color:#8a8a8a;">/</div>
<div class="t bc3" style="left:342.50px;top:49.20px;font-size:12.8px;line-height:18px;height:18px;color:#4d4d4d;text-decoration:underline;text-decoration-color:#9a9a9a;text-underline-offset:2px;letter-spacing:-0.031px;">260407_QuickA...</div>
<div class="t" style="left:453.80px;top:49.20px;font-size:12.8px;line-height:18px;height:18px;color:#8a8a8a;">/</div>
<div class="t bc4" style="left:464px;top:49.20px;font-size:12.8px;line-height:18px;height:18px;color:#4d4d4d;letter-spacing:0.008px;">260407_QuickAd...</div>
<svg class="ic" viewBox="0 0 24 24" style="left:681.10px;top:49.20px;width:15px;height:15px;color:#e0354a;stroke-width:1.9;"><path d="M3 6h18"/><path d="M19 6v14c0 1-1 2-2 2H7c-1 0-2-1-2-2V6"/><path d="M8 6V4c0-1 1-2 2-2h4c1 0 2 1 2 2v2"/><path d="M10 11v6"/><path d="M14 11v6"/></svg>
<svg class="ic" viewBox="0 0 24 24" style="left:714.36px;top:49.20px;width:15px;height:15px;color:#1f6a3a;stroke-width:1.9;"><path d="M12 17v5"/><path d="M9 10.76a2 2 0 0 1-1.11 1.79l-1.78.9A2 2 0 0 0 5 15.24V16a1 1 0 0 0 1 1h12a1 1 0 0 0 1-1v-.76a2 2 0 0 0-1.11-1.79l-1.78-.9A2 2 0 0 1 15 10.76V7a1 1 0 0 1 1-1 2 2 0 0 0 0-4H8a2 2 0 0 0 0 4 1 1 0 0 1 1 1z"/></svg>
<svg class="ic" viewBox="0 0 24 24" style="left:747.62px;top:49.20px;width:15px;height:15px;color:#efc36a;stroke-width:1.9;"><path d="M20 20a2 2 0 0 0 2-2V8a2 2 0 0 0-2-2h-7.9a2 2 0 0 1-1.69-.9L9.6 3.9A2 2 0 0 0 7.93 3H4a2 2 0 0 0-2 2v13a2 2 0 0 0 2 2Z"/><circle cx="11.5" cy="12.5" r="2.5"/><path d="M13.3 14.3 15 16"/></svg>
<svg class="ic" viewBox="0 0 24 24" style="left:780.88px;top:49.20px;width:15px;height:15px;color:#1f6a3a;stroke-width:1.9;"><path d="M7 7h10v10"/><path d="M7 17 17 7"/></svg>
<svg class="ic" viewBox="0 0 24 24" style="left:814.14px;top:49.20px;width:15px;height:15px;color:#1f6a3a;stroke-width:1.9;"><circle cx="12" cy="12" r="10"/><path d="M12 8v4"/><path d="M12 16h.01"/></svg>
<svg class="ic" viewBox="0 0 24 24" style="left:847.40px;top:49.20px;width:15px;height:15px;color:#1f6a3a;stroke-width:1.9;"><rect width="9" height="6" x="6" y="14" rx="2"/><rect width="16" height="6" x="6" y="4" rx="2"/><path d="M2 2v20"/></svg>
<svg class="ic" viewBox="0 0 24 24" style="left:880.66px;top:49.20px;width:15px;height:15px;color:#1f6a3a;stroke-width:1.9;"><path d="M8 3 4 7l4 4"/><path d="M4 7h16"/><path d="m16 21 4-4-4-4"/><path d="M20 17H4"/></svg>
<svg class="ic" viewBox="0 0 24 24" style="left:913.92px;top:49.20px;width:15px;height:15px;color:#1f6a3a;stroke-width:1.9;"><rect width="18" height="18" x="3" y="3" rx="2"/><path d="M7 3v18"/><path d="M3 7.5h4"/><path d="M3 12h18"/><path d="M3 16.5h4"/><path d="M17 3v18"/><path d="M17 7.5h4"/><path d="M17 16.5h4"/></svg>
<svg class="ic" viewBox="0 0 24 24" style="left:947.18px;top:49.20px;width:15px;height:15px;color:#5a6bea;stroke-width:1.9;"><path d="m7 11 2-2-2-2"/><path d="M11 13h4"/><rect width="18" height="18" x="3" y="3" rx="2"/></svg>
<svg class="ic" viewBox="0 0 24 24" style="left:980.44px;top:49.20px;width:15px;height:15px;color:#1f6a3a;stroke-width:1.9;"><g fill="currentColor" stroke="none"><rect x="3" y="9.5" width="5.5" height="5.5"/><rect x="9" y="11.2" width="4" height="2"/><rect x="13" y="2.5" width="6" height="5.5"/><rect x="13" y="9.5" width="6" height="5.5"/><rect x="13" y="16.5" width="6" height="5.5"/></g></svg>
<svg class="ic" viewBox="0 0 24 24" style="left:1013.70px;top:49.20px;width:15px;height:15px;color:#1f6a3a;stroke-width:1.9;"><path d="M9 21H5a2 2 0 0 1-2-2V5a2 2 0 0 1 2-2h4"/><path d="m16 17 5-5-5-5"/><path d="M21 12H9"/></svg>
<svg class="ic" viewBox="0 0 24 24" style="left:1046.96px;top:49.20px;width:15px;height:15px;color:#1f6a3a;stroke-width:1.9;"><path d="M3 12a9 9 0 0 1 9-9 9.75 9.75 0 0 1 6.74 2.74L21 8"/><path d="M21 3v5h-5"/><path d="M21 12a9 9 0 0 1-9 9 9.75 9.75 0 0 1-6.74-2.74L3 16"/><path d="M8 16H3v5"/></svg>
<svg class="ic" viewBox="0 0 24 24" style="left:1080.22px;top:49.20px;width:15px;height:15px;color:#1f6a3a;stroke-width:1.9;"><circle cx="12" cy="18" r="3"/><circle cx="6" cy="6" r="3"/><circle cx="18" cy="6" r="3"/><path d="M18 9v2c0 .6-.4 1-1 1H7c-.6 0-1-.4-1-1V9"/><path d="M12 12v3"/></svg>
<svg class="ic" viewBox="0 0 24 24" style="left:1113.48px;top:49.20px;width:15px;height:15px;color:#1f6a3a;stroke-width:1.9;"><rect width="18" height="18" x="3" y="3" rx="2"/><path d="M7.5 3v18"/><path d="M12 3v18"/><path d="M16.5 3v18"/></svg>
<svg class="ic" viewBox="0 0 24 24" style="left:1146.74px;top:49.20px;width:15px;height:15px;color:#1f6a3a;stroke-width:1.9;"><path d="M2.062 12.348a1 1 0 0 1 0-.696 10.75 10.75 0 0 1 19.876 0 1 1 0 0 1 0 .696 10.75 10.75 0 0 1-19.876 0"/><circle cx="12" cy="12" r="3"/></svg>
<svg class="ic" viewBox="0 0 24 24" style="left:1180px;top:49.20px;width:15px;height:15px;color:#1f6a3a;stroke-width:1.9;"><rect x="16" y="16" width="6" height="6" rx="1"/><rect x="2" y="16" width="6" height="6" rx="1"/><rect x="9" y="2" width="6" height="6" rx="1"/><path d="M5 16v-3a1 1 0 0 1 1-1h12a1 1 0 0 1 1 1v3"/><path d="M12 12V8"/></svg>
<svg class="ic" viewBox="0 0 24 24" style="left:1213.26px;top:49.20px;width:15px;height:15px;color:#1f6a3a;stroke-width:1.9;"><path d="M21 12h-8"/><path d="M21 6H8"/><path d="M21 18h-8"/><path d="M3 6v4c0 1.1.9 2 2 2h3"/><path d="M3 10v6c0 1.1.9 2 2 2h3"/></svg>
<svg class="ic" viewBox="0 0 24 24" style="left:1246.52px;top:49.20px;width:15px;height:15px;color:#1f6a3a;stroke-width:1.9;"><path d="M13.4 2H6a2 2 0 0 0-2 2v16a2 2 0 0 0 2 2h12a2 2 0 0 0 2-2v-7.4"/><path d="M2 6h4"/><path d="M2 10h4"/><path d="M2 14h4"/><path d="M2 18h4"/><path d="M21.378 5.626a1 1 0 1 0-3.004-3.004l-5.01 5.012a2 2 0 0 0-.506.854l-.837 2.87a.5.5 0 0 0 .62.62l2.87-.837a2 2 0 0 0 .854-.506z"/></svg>
<svg class="ic" viewBox="0 0 24 24" style="left:1279.78px;top:49.20px;width:15px;height:15px;color:#e8596c;stroke-width:1.9;"><path d="M2 3h20"/><path d="M21 3v11a2 2 0 0 1-2 2H5a2 2 0 0 1-2-2V3"/><path d="m7 21 5-5 5 5"/></svg>
<svg class="ic" viewBox="0 0 24 24" style="left:1313.04px;top:49.20px;width:15px;height:15px;color:#555;stroke-width:1.9;"><g fill="currentColor"><circle cx="12" cy="12" r="1"/><circle cx="12" cy="5" r="1"/><circle cx="12" cy="19" r="1"/></g></svg>
<div class="abs" id="divider"></div><div class="abs" id="divtop"></div>
<div class="abs" id="sidebar">
<svg class="ic" viewBox="0 0 24 24" style="left:25.50px;top:27.50px;width:11px;height:11px;color:#bdbdbd;stroke-width:2;"><path d="m9 18 6-6-6-6"/></svg><div class="t rw0" style="left:43px;top:23px;font-size:14.3px;line-height:22px;height:22px;color:#151515;font-weight:700;letter-spacing:-0.352px;">【界面-熊猫】内容居中生成卡</div><svg class="ic" viewBox="0 0 24 24" style="left:484.65px;top:25.65px;width:15.5px;height:15.5px;color:#756f68;stroke-width:1.8;"><path d="M3 12a9 9 0 1 0 9-9 9.75 9.75 0 0 0-6.74 2.74L3 8"/><path d="M3 3v5h5"/></svg><svg class="ic" viewBox="0 0 24 24" style="left:516.15px;top:25.15px;width:16.5px;height:16.5px;color:#756f68;stroke-width:1.8;"><path d="M12 13v8l-4-4"/><path d="m12 21 4-4"/><path d="M4.393 15.269A7 7 0 1 1 15.71 8h1.79a4.5 4.5 0 0 1 2.436 8.284"/></svg><div class="abs" style="left:11px;top:40.30px;width:541px;height:13.50px;border-bottom:1px solid #d6d4d6;border-radius:0 0 13px 13px;"></div>
<svg class="ic" viewBox="0 0 24 24" style="left:25.50px;top:71px;width:11px;height:11px;color:#bdbdbd;stroke-width:2;"><path d="m9 18 6-6-6-6"/></svg><div class="t rw1" style="left:43px;top:65.50px;font-size:14.3px;line-height:22px;height:22px;color:#151515;font-weight:700;letter-spacing:0.458px;">Obsidian-Setting-Grid-Layout</div><svg class="ic" viewBox="0 0 24 24" style="left:484.65px;top:69.15px;width:15.5px;height:15.5px;color:#756f68;stroke-width:1.8;"><path d="M3 12a9 9 0 1 0 9-9 9.75 9.75 0 0 0-6.74 2.74L3 8"/><path d="M3 3v5h5"/></svg><svg class="ic" viewBox="0 0 24 24" style="left:516.15px;top:68.65px;width:16.5px;height:16.5px;color:#756f68;stroke-width:1.8;"><path d="M12 13v8l-4-4"/><path d="m12 21 4-4"/><path d="M4.393 15.269A7 7 0 1 1 15.71 8h1.79a4.5 4.5 0 0 1 2.436 8.284"/></svg><div class="abs" style="left:11px;top:82.50px;width:541px;height:13.50px;border-bottom:1px solid #d6d4d6;border-radius:0 0 13px 13px;"></div>
<svg class="ic" viewBox="0 0 24 24" style="left:25.50px;top:113.50px;width:11px;height:11px;color:#bdbdbd;stroke-width:2;"><path d="m9 18 6-6-6-6"/></svg><div class="t rw2" style="left:43px;top:109px;font-size:14.3px;line-height:22px;height:22px;color:#151515;font-weight:700;letter-spacing:0.012px;">【界面-熊猫】自动悬浮两侧侧边栏</div><svg class="ic" viewBox="0 0 24 24" style="left:484.65px;top:111.65px;width:15.5px;height:15.5px;color:#756f68;stroke-width:1.8;"><path d="M3 12a9 9 0 1 0 9-9 9.75 9.75 0 0 0-6.74 2.74L3 8"/><path d="M3 3v5h5"/></svg><svg class="ic" viewBox="0 0 24 24" style="left:516.15px;top:111.15px;width:16.5px;height:16.5px;color:#756f68;stroke-width:1.8;"><path d="M12 13v8l-4-4"/><path d="m12 21 4-4"/><path d="M4.393 15.269A7 7 0 1 1 15.71 8h1.79a4.5 4.5 0 0 1 2.436 8.284"/></svg><div class="abs" style="left:11px;top:124.50px;width:541px;height:13.50px;border-bottom:1px solid #d6d4d6;border-radius:0 0 13px 13px;"></div>
<svg class="ic" viewBox="0 0 24 24" style="left:25.50px;top:155.50px;width:11px;height:11px;color:#bdbdbd;stroke-width:2;"><path d="m6 9 6 6 6-6"/></svg><div class="t rw3" style="left:43px;top:151px;font-size:14.3px;line-height:22px;height:22px;color:#151515;font-weight:700;letter-spacing:-0.038px;">【Canvas-熊猫】Canvas 主题配色</div><svg class="ic" viewBox="0 0 24 24" style="left:484.65px;top:153.65px;width:15.5px;height:15.5px;color:#756f68;stroke-width:1.8;"><path d="M3 12a9 9 0 1 0 9-9 9.75 9.75 0 0 0-6.74 2.74L3 8"/><path d="M3 3v5h5"/></svg><svg class="ic" viewBox="0 0 24 24" style="left:516.15px;top:153.15px;width:16.5px;height:16.5px;color:#756f68;stroke-width:1.8;"><path d="M12 13v8l-4-4"/><path d="m12 21 4-4"/><path d="M4.393 15.269A7 7 0 1 1 15.71 8h1.79a4.5 4.5 0 0 1 2.436 8.284"/></svg><div class="abs" style="left:11px;top:166.40px;width:541px;height:13.50px;border-bottom:1px solid #d6d4d6;border-radius:0 0 13px 13px;"></div>
<div class="abs" style="left:0px;top:0px;width:575px;height:37px;background:#fafafa;"></div>
<div class="abs" style="left:0px;top:37px;width:575px;height:1px;background:#dedcde;"></div>
<div class="abs" style="left:289px;top:7.30px;width:32px;height:22.50px;background:#ebe7ea;border-radius:5px;"></div>
<svg class="ic" viewBox="0 0 24 24" style="left:15.35px;top:10.15px;width:16.5px;height:16.5px;color:#756f68;stroke-width:1.8;"><path d="M15 2H6a2 2 0 0 0-2 2v16a2 2 0 0 0 2 2h12a2 2 0 0 0 2-2V7Z"/><path d="M14 2v4a2 2 0 0 0 2 2h4"/></svg>
<svg class="ic" viewBox="0 0 24 24" style="left:51.25px;top:10.15px;width:16.5px;height:16.5px;color:#756f68;stroke-width:1.8;"><circle cx="12" cy="12" r="10"/><path d="M12 16v-4"/><path d="M12 8h.01"/></svg>
<svg class="ic" viewBox="0 0 24 24" style="left:86.35px;top:10.15px;width:16.5px;height:16.5px;color:#756f68;stroke-width:1.8;"><path d="m21.64 3.64-1.28-1.28a1.21 1.21 0 0 0-1.72 0L2.36 18.64a1.21 1.21 0 0 0 0 1.72l1.28 1.28a1.2 1.2 0 0 0 1.72 0L21.64 5.36a1.2 1.2 0 0 0 0-1.72"/><path d="m14 7 3 3"/><path d="M5 6v4"/><path d="M19 14v4"/><path d="M10 2v2"/><path d="M7 8H3"/><path d="M21 16h-4"/><path d="M11 3H9"/></svg>
<svg class="ic" viewBox="0 0 24 24" style="left:121.15px;top:10.15px;width:16.5px;height:16.5px;color:#756f68;stroke-width:1.8;"><circle cx="11" cy="11" r="8"/><path d="m21 21-4.3-4.3"/></svg>
<svg class="ic" viewBox="0 0 24 24" style="left:156.25px;top:10.15px;width:16.5px;height:16.5px;color:#756f68;stroke-width:1.8;"><path d="M20 7h-3a2 2 0 0 1-2-2V2"/><path d="M9 18a2 2 0 0 1-2-2V4a2 2 0 0 1 2-2h7l4 4v10a2 2 0 0 1-2 2Z"/><path d="M3 7.6v12.8A1.6 1.6 0 0 0 4.6 22h9.8"/></svg>
<svg class="ic" viewBox="0 0 24 24" style="left:191.45px;top:10.15px;width:16.5px;height:16.5px;color:#756f68;stroke-width:1.8;"><circle cx="12" cy="12" r="10"/><path d="M12 6v6l4 2"/></svg>
<svg class="ic" viewBox="0 0 24 24" style="left:226.55px;top:10.15px;width:16.5px;height:16.5px;color:#756f68;stroke-width:1.8;"><path d="M20 7h-3a2 2 0 0 1-2-2V2"/><path d="M9 18a2 2 0 0 1-2-2V4a2 2 0 0 1 2-2h7l4 4v10a2 2 0 0 1-2 2Z"/><path d="M3 7.6v12.8A1.6 1.6 0 0 0 4.6 22h9.8"/></svg>
<svg class="ic" viewBox="0 0 24 24" style="left:261.15px;top:10.15px;width:16.5px;height:16.5px;color:#756f68;stroke-width:1.8;"><path d="M21 6H3"/><path d="M15 12H3"/><path d="M17 18H3"/></svg>
<svg class="ic" viewBox="0 0 24 24" style="left:297.25px;top:10.15px;width:16.5px;height:16.5px;color:#222;stroke-width:1.9;"><path d="M12.22 2h-.44a2 2 0 0 0-2 2v.18a2 2 0 0 1-1 1.73l-.43.25a2 2 0 0 1-2 0l-.15-.08a2 2 0 0 0-2.73.73l-.22.38a2 2 0 0 0 .73 2.73l.15.1a2 2 0 0 1 1 1.72v.51a2 2 0 0 1-1 1.74l-.15.09a2 2 0 0 0-.73 2.73l.22.38a2 2 0 0 0 2.73.73l.15-.08a2 2 0 0 1 2 0l.43.25a2 2 0 0 1 1 1.73V20a2 2 0 0 0 2 2h.44a2 2 0 0 0 2-2v-.18a2 2 0 0 1 1-1.73l.43-.25a2 2 0 0 1 2 0l.15.08a2 2 0 0 0 2.73-.73l.22-.39a2 2 0 0 0-.73-2.73l-.15-.08a2 2 0 0 1-1-1.74v-.5a2 2 0 0 1 1-1.74l.15-.09a2 2 0 0 0 .73-2.73l-.22-.38a2 2 0 0 0-2.73-.73l-.15.08a2 2 0 0 1-2 0l-.43-.25a2 2 0 0 1-1-1.73V4a2 2 0 0 0-2-2z"/><circle cx="12" cy="12" r="3"/></svg>
<svg class="abs" style="left:60.59999999999991px;top:209px;width:16px;height:16px" viewBox="0 0 16 16"><path d="M8 1.200C4 1.200 1 4 1 7.800c0 3.600 3 6.800 6.600 6.800 1.400 0 1.800-1 1.400-1.900-.5-1.100.2-2.100 1.500-2.100h1.900c1.500 0 2.600-1.200 2.600-2.900C15 4 11.900 1.200 8 1.200z" fill="#f2c9b8"/><circle cx="4.300" cy="8.600" r="1.200" fill="#6aa7e8"/><circle cx="5.200" cy="5" r="1.200" fill="#e8596c"/><circle cx="8.800" cy="3.600" r="1.200" fill="#f3b73e"/><circle cx="12" cy="5.800" r="1.200" fill="#6cc36c"/><circle cx="5.800" cy="11.700" r="1.100" fill="#a06be0"/></svg>
<div class="t sh1" style="left:82.60px;top:206.60px;font-size:14.3px;line-height:22px;height:22px;color:#151515;font-weight:700;letter-spacing:-0.065px;">配色方案设置</div>
<svg class="ic" viewBox="0 0 24 24" style="left:516.15px;top:209.25px;width:16.5px;height:16.5px;color:#756f68;stroke-width:1.8;"><path d="M12 13v8l-4-4"/><path d="m12 21 4-4"/><path d="M4.393 15.269A7 7 0 1 1 15.71 8h1.79a4.5 4.5 0 0 1 2.436 8.284"/></svg>
<div class="abs" style="left:46px;top:222.30px;width:506px;height:13.50px;border-bottom:1px solid #d6d4d6;border-radius:0 0 13px 13px;"></div>
<div class="t s1" style="left:59px;top:266.80px;font-size:14.2px;line-height:22px;height:22px;color:#1a1a1a;letter-spacing:0.061px;">选择主题颜色方案</div>
<div class="t" style="left:59px;top:291.50px;font-size:9.75px;line-height:14px;height:14px;color:#4a4f4a;">默认：</div>
<svg class="abs" style="left:90.20000000000005px;top:292.4px;width:12px;height:12px" viewBox="0 0 12 12" fill="none" stroke-width="1.700"><path d="M1.500 11A9.500 9.500 0 0 1 11 1.500" stroke="#e8596c"/><path d="M3.200 11A7.800 7.800 0 0 1 11 3.200" stroke="#f3a63e"/><path d="M4.900 11A6.100 6.100 0 0 1 11 4.900" stroke="#f0d84a"/><path d="M6.600 11A4.400 4.400 0 0 1 11 6.600" stroke="#5cb86a"/><path d="M8.300 11A2.700 2.700 0 0 1 11 8.300" stroke="#5a8be8"/></svg>
<div class="t" style="left:105.80px;top:291.50px;font-size:9.75px;line-height:14px;height:14px;color:#555f57;">经典彩虹</div>
<div class="abs" style="left:59px;top:324.30px;width:129.50px;height:28.60px;background:#fbfbfb;border:1px solid #e6e3e6;border-radius:6px;box-shadow:0 1px 2px rgba(0,0,0,.10);"></div>
<svg class="abs" style="left:70.70000000000005px;top:333.6px;width:13px;height:12px" viewBox="0 0 13 12"><path d="M6.500 11.500C2.500 8.500.500 6.300.500 3.800.500 1.900 1.900.500 3.600.500c1.200 0 2.300.7 2.900 1.800C7.100 1.200 8.200.500 9.400.500c1.700 0 3.100 1.400 3.100 3.300 0 2.500-2 4.700-6 7.700z" fill="#8e3fe0"/></svg>
<div class="t dd" style="left:89px;top:330px;font-size:12.4px;line-height:18px;height:18px;color:#222;letter-spacing:-0.032px;">浪漫温柔系</div>
<svg class="ic" viewBox="0 0 24 24" style="left:171.75px;top:333.05px;width:10.5px;height:10.5px;color:#333;stroke-width:2.3;"><path d="m7 15 5 5 5-5"/><path d="m7 9 5-5 5 5"/></svg>
<svg class="ic" viewBox="0 0 24 24" style="left:201.55px;top:330.55px;width:15.5px;height:15.5px;color:#756f68;stroke-width:1.8;"><path d="M3 12a9 9 0 1 0 9-9 9.75 9.75 0 0 0-6.74 2.74L3 8"/><path d="M3 3v5h5"/></svg>
<div class="t s2" style="left:59px;top:389px;font-size:14.2px;line-height:22px;height:22px;color:#1a1a1a;">开启卡片渐变背景</div>
<div class="t d2" style="left:59px;top:412.50px;font-size:11.4px;line-height:16px;height:16px;color:#66756a;letter-spacing:-0.018px;">为有颜色的卡片添加渐变背景效果</div>
<div class="abs" style="left:59px;top:450px;width:32px;height:17.60px;background:#a07ce9;border-radius:9px;"></div>
<div class="abs" style="left:75.50px;top:452.20px;width:13.30px;height:13.20px;background:#fdfdfd;border-radius:50%;"></div>
<svg class="ic" viewBox="0 0 24 24" style="left:103.75px;top:451.05px;width:15.5px;height:15.5px;color:#756f68;stroke-width:1.8;"><path d="M3 12a9 9 0 1 0 9-9 9.75 9.75 0 0 0-6.74 2.74L3 8"/><path d="M3 3v5h5"/></svg>
<svg class="abs" style="left:61.5px;top:524.7px;width:15px;height:15px" viewBox="0 0 15 15"><rect width="15" height="15" rx="1" fill="#d9772f"/><g stroke="#f2b078" stroke-width="1"><path d="M0 5h15M0 10h15M5 0v5M11 0v5M3 5v5M8 5v5M13 5v5M5 10v5M11 10v5"/></g></svg>
<div class="t sh2" style="left:82.60px;top:521.60px;font-size:14.3px;line-height:22px;height:22px;color:#151515;font-weight:700;">基础样式设置</div>
<svg class="ic" viewBox="0 0 24 24" style="left:516.15px;top:524.25px;width:16.5px;height:16.5px;color:#756f68;stroke-width:1.8;"><path d="M12 13v8l-4-4"/><path d="m12 21 4-4"/><path d="M4.393 15.269A7 7 0 1 1 15.71 8h1.79a4.5 4.5 0 0 1 2.436 8.284"/></svg>
<div class="abs" style="left:46px;top:537.30px;width:506px;height:13.50px;border-bottom:1px solid #d6d4d6;border-radius:0 0 13px 13px;"></div>
<div class="t s3" style="left:59px;top:582px;font-size:14.2px;line-height:22px;height:22px;color:#1a1a1a;">卡片边框宽度</div>
<div class="t" style="left:59px;top:605.90px;font-size:9.75px;line-height:14px;height:14px;color:#4a4f4a;">默认：</div>
<div class="t" style="left:89.50px;top:605.90px;font-size:10.6px;line-height:14px;height:14px;color:#555f57;">1</div>
<div class="abs" style="left:62px;top:649.80px;width:93.50px;height:3px;background:#dcdadc;border-radius:2px;"></div>
<div class="abs" style="left:61.20px;top:643.20px;width:16.40px;height:16.40px;background:#fbfbfb;border:1px solid #dddadd;border-radius:50%;box-shadow:0 1px 2px rgba(0,0,0,.15);"></div>
<svg class="ic" viewBox="0 0 24 24" style="left:169.45px;top:643.75px;width:15.5px;height:15.5px;color:#756f68;stroke-width:1.8;"><path d="M3 12a9 9 0 1 0 9-9 9.75 9.75 0 0 0-6.74 2.74L3 8"/><path d="M3 3v5h5"/></svg>
<div class="t s4" style="left:59px;top:700px;font-size:14.2px;line-height:22px;height:22px;color:#1a1a1a;">卡片渐变背景透明度</div>
<div class="t d4" style="left:59px;top:723px;font-size:11.4px;line-height:16px;height:16px;color:#66756a;letter-spacing:0.085px;">开启渐变背景时的透明度 (0.1 - 1.0)</div>
<div class="t" style="left:59px;top:739.70px;font-size:9.75px;line-height:14px;height:14px;color:#4a4f4a;">默认：</div>
<div class="t" style="left:89.20px;top:739.70px;font-size:10.6px;line-height:14px;height:14px;color:#555f57;">0.6</div>
<div class="abs" style="left:61px;top:784px;width:94.50px;height:1.60px;background:#dcdadc;border-radius:2px;"></div>
<div class="abs" style="left:104.20px;top:776.50px;width:16.40px;height:16.40px;background:#fbfbfb;border:1px solid #dddadd;border-radius:50%;box-shadow:0 1px 2px rgba(0,0,0,.15);"></div>
<svg class="ic" viewBox="0 0 24 24" style="left:169.45px;top:777.05px;width:15.5px;height:15.5px;color:#756f68;stroke-width:1.8;"><path d="M3 12a9 9 0 1 0 9-9 9.75 9.75 0 0 0-6.74 2.74L3 8"/><path d="M3 3v5h5"/></svg>
<svg class="ic" viewBox="0 0 24 24" style="left:25.50px;top:867.80px;width:11px;height:11px;color:#bdbdbd;stroke-width:2;"><path d="m9 18 6-6-6-6"/></svg><div class="t rw4" style="left:43px;top:863.30px;font-size:14.3px;line-height:22px;height:22px;color:#151515;font-weight:700;letter-spacing:0.042px;">【字体-熊猫】隐私模式</div><svg class="ic" viewBox="0 0 24 24" style="left:484.65px;top:865.95px;width:15.5px;height:15.5px;color:#756f68;stroke-width:1.8;"><path d="M3 12a9 9 0 1 0 9-9 9.75 9.75 0 0 0-6.74 2.74L3 8"/><path d="M3 3v5h5"/></svg><svg class="ic" viewBox="0 0 24 24" style="left:516.15px;top:865.45px;width:16.5px;height:16.5px;color:#756f68;stroke-width:1.8;"><path d="M12 13v8l-4-4"/><path d="m12 21 4-4"/><path d="M4.393 15.269A7 7 0 1 1 15.71 8h1.79a4.5 4.5 0 0 1 2.436 8.284"/></svg><div class="abs" style="left:11px;top:879.40px;width:541px;height:13.50px;border-bottom:1px solid #d6d4d6;border-radius:0 0 13px 13px;"></div>
<svg class="ic" viewBox="0 0 24 24" style="left:25.50px;top:909.90px;width:11px;height:11px;color:#bdbdbd;stroke-width:2;"><path d="m9 18 6-6-6-6"/></svg><div class="t rw5" style="left:43px;top:905.40px;font-size:14.3px;line-height:22px;height:22px;color:#151515;font-weight:700;letter-spacing:0.203px;">【Image-熊猫】启动或关闭缩放图片</div><svg class="ic" viewBox="0 0 24 24" style="left:484.65px;top:908.05px;width:15.5px;height:15.5px;color:#756f68;stroke-width:1.8;"><path d="M3 12a9 9 0 1 0 9-9 9.75 9.75 0 0 0-6.74 2.74L3 8"/><path d="M3 3v5h5"/></svg><svg class="ic" viewBox="0 0 24 24" style="left:516.15px;top:907.55px;width:16.5px;height:16.5px;color:#756f68;stroke-width:1.8;"><path d="M12 13v8l-4-4"/><path d="m12 21 4-4"/><path d="M4.393 15.269A7 7 0 1 1 15.71 8h1.79a4.5 4.5 0 0 1 2.436 8.284"/></svg><div class="abs" style="left:11px;top:921.30px;width:541px;height:13.50px;border-bottom:1px solid #d6d4d6;border-radius:0 0 13px 13px;"></div>
<svg class="ic" viewBox="0 0 24 24" style="left:25.50px;top:951.50px;width:11px;height:11px;color:#bdbdbd;stroke-width:2;"><path d="m9 18 6-6-6-6"/></svg><div class="t rw6" style="left:43px;top:946px;font-size:14.3px;line-height:22px;height:22px;color:#151515;font-weight:700;letter-spacing:0.518px;">Moy Link Mods</div><svg class="ic" viewBox="0 0 24 24" style="left:484.65px;top:949.65px;width:15.5px;height:15.5px;color:#756f68;stroke-width:1.8;"><path d="M3 12a9 9 0 1 0 9-9 9.75 9.75 0 0 0-6.74 2.74L3 8"/><path d="M3 3v5h5"/></svg><svg class="ic" viewBox="0 0 24 24" style="left:516.15px;top:949.15px;width:16.5px;height:16.5px;color:#756f68;stroke-width:1.8;"><path d="M12 13v8l-4-4"/><path d="m12 21 4-4"/><path d="M4.393 15.269A7 7 0 1 1 15.71 8h1.79a4.5 4.5 0 0 1 2.436 8.284"/></svg><div class="abs" style="left:11px;top:963.40px;width:541px;height:13.50px;border-bottom:1px solid #d6d4d6;border-radius:0 0 13px 13px;"></div>
<svg class="ic" viewBox="0 0 24 24" style="left:25.50px;top:994.10px;width:11px;height:11px;color:#bdbdbd;stroke-width:2;"><path d="m9 18 6-6-6-6"/></svg><div class="t rw7" style="left:43px;top:988.60px;font-size:14.3px;line-height:22px;height:22px;color:#151515;font-weight:700;letter-spacing:0.067px;">Kanban Styles</div><svg class="ic" viewBox="0 0 24 24" style="left:484.65px;top:992.25px;width:15.5px;height:15.5px;color:#756f68;stroke-width:1.8;"><path d="M3 12a9 9 0 1 0 9-9 9.75 9.75 0 0 0-6.74 2.74L3 8"/><path d="M3 3v5h5"/></svg><svg class="ic" viewBox="0 0 24 24" style="left:516.15px;top:991.75px;width:16.5px;height:16.5px;color:#756f68;stroke-width:1.8;"><path d="M12 13v8l-4-4"/><path d="m12 21 4-4"/><path d="M4.393 15.269A7 7 0 1 1 15.71 8h1.79a4.5 4.5 0 0 1 2.436 8.284"/></svg><div class="abs" style="left:11px;top:1005.30px;width:541px;height:13.50px;border-bottom:1px solid #d6d4d6;border-radius:0 0 13px 13px;"></div>
<svg class="ic" viewBox="0 0 24 24" style="left:25.50px;top:1035.90px;width:11px;height:11px;color:#bdbdbd;stroke-width:2;"><path d="m9 18 6-6-6-6"/></svg><div class="t rw8" style="left:43px;top:1030.40px;font-size:14.3px;line-height:22px;height:22px;color:#151515;font-weight:700;letter-spacing:0.385px;">Note Toolbar 仿 cMenu 的菜单栏</div><svg class="ic" viewBox="0 0 24 24" style="left:484.65px;top:1034.05px;width:15.5px;height:15.5px;color:#756f68;stroke-width:1.8;"><path d="M3 12a9 9 0 1 0 9-9 9.75 9.75 0 0 0-6.74 2.74L3 8"/><path d="M3 3v5h5"/></svg><svg class="ic" viewBox="0 0 24 24" style="left:516.15px;top:1033.55px;width:16.5px;height:16.5px;color:#756f68;stroke-width:1.8;"><path d="M12 13v8l-4-4"/><path d="m12 21 4-4"/><path d="M4.393 15.269A7 7 0 1 1 15.71 8h1.79a4.5 4.5 0 0 1 2.436 8.284"/></svg><div class="abs" style="left:11px;top:1047.40px;width:541px;height:13.50px;border-bottom:1px solid #d6d4d6;border-radius:0 0 13px 13px;"></div>
<div class="abs" style="left:566px;top:277px;width:7.50px;height:685px;background:#e9e5e9;border-radius:4px;"></div>
<div class="abs" style="left:530.50px;top:879.40px;width:25.30px;height:28.20px;background:rgba(250,250,250,.35);border:1px solid #e4e1e4;border-radius:5px;box-shadow:0 1px 2px rgba(0,0,0,.08);"></div>
<div class="abs" style="left:530.50px;top:922.20px;width:25.30px;height:28.20px;background:rgba(250,250,250,.35);border:1px solid #e4e1e4;border-radius:5px;box-shadow:0 1px 2px rgba(0,0,0,.08);"></div>
<div class="abs" style="left:530.50px;top:965px;width:25.30px;height:28.20px;background:rgba(250,250,250,.35);border:1px solid #e4e1e4;border-radius:5px;box-shadow:0 1px 2px rgba(0,0,0,.08);"></div>
<div class="abs" style="left:530.50px;top:1008.60px;width:25.30px;height:28.20px;background:rgba(250,250,250,.35);border:1px solid #e4e1e4;border-radius:5px;box-shadow:0 1px 2px rgba(0,0,0,.08);"></div>
<svg class="abs" style="left:0;top:0;width:575px;height:1051px;overflow:visible" viewBox="0 0 575 1051"><path d="M540.3 898.2v-8.4m-2.200 2.300l2.200-2.300 2.200 2.300M545.7 898.2v-8.4m-2.200 2.300l2.200-2.300 2.200 2.300" fill="none" stroke="#121c15" stroke-width="1.200" stroke-linecap="round" stroke-linejoin="round"/></svg>
<svg class="abs" style="left:0;top:0;width:575px;height:1051px;overflow:visible" viewBox="0 0 575 1051"><path d="M543.0 942.2v-10.8m-2.200 2.300l2.200-2.300 2.200 2.300" fill="none" stroke="#121c15" stroke-width="1.200" stroke-linecap="round" stroke-linejoin="round"/></svg>
<svg class="abs" style="left:0;top:0;width:575px;height:1051px;overflow:visible" viewBox="0 0 575 1051"><path d="M543.0 974.1v10.8m-2.200-2.300l2.200 2.300 2.200-2.300" fill="none" stroke="#121c15" stroke-width="1.200" stroke-linecap="round" stroke-linejoin="round"/></svg>
<svg class="abs" style="left:0;top:0;width:575px;height:1051px;overflow:visible" viewBox="0 0 575 1051"><path d="M540.3 1019.3v8.4m-2.200-2.300l2.200 2.300 2.200-2.300M545.7 1019.3v8.4m-2.200-2.300l2.200 2.300 2.200-2.300" fill="none" stroke="#121c15" stroke-width="1.200" stroke-linecap="round" stroke-linejoin="round"/></svg>
</div>
<div class="abs" style="left:0;top:1052px;width:1px;height:28px;background:#dedede"></div>
<div class="abs" id="status">
<div class="t st1" style="left:1460.70px;top:7.30px;font-size:11.3px;line-height:16px;height:16px;color:#6f6f6f;letter-spacing:-0.060px;">1 条反向链接</div>
<svg class="ic" viewBox="0 0 24 24" style="left:1534px;top:7.80px;width:14px;height:14px;color:#2f5a3c;stroke-width:1.9;"><path d="M12 7v14"/><path d="M3 18a1 1 0 0 1-1-1V4a1 1 0 0 1 1-1h5a4 4 0 0 1 4 4 4 4 0 0 1 4-4h5a1 1 0 0 1 1 1v13a1 1 0 0 1-1 1h-6a3 3 0 0 0-3 3 3 3 0 0 0-3-3z"/></svg>
<div class="t st2" style="left:1553.80px;top:7.30px;font-size:11.3px;line-height:16px;height:16px;color:#6f6f6f;letter-spacing:0.008px;">30分钟</div>
<svg class="ic" viewBox="0 0 24 24" style="left:1596.80px;top:7.50px;width:14px;height:14px;color:#555;stroke-width:1.9;"><path d="M3 12a9 9 0 0 1 9-9 9.75 9.75 0 0 1 6.74 2.74L21 8"/><path d="M21 3v5h-5"/><path d="M21 12a9 9 0 0 1-9 9 9.75 9.75 0 0 1-6.74-2.74L3 16"/><path d="M8 16H3v5"/></svg>
<div class="abs" style="left:1620px;top:13.400000000000091px;width:143px;height:2.600px;background:#e2e0e2;border-radius:2px"></div>
<div class="abs" style="left:1716.2px;top:6.2999999999999545px;width:16.400px;height:16.400px;background:#fbfbfb;border:1px solid #dddadd;border-radius:50%;box-shadow:0 1px 2px rgba(0,0,0,.15)"></div>
<div class="abs" style="left:1774px;top:4px;width:24px;height:21px;background:#9b72f0;border-radius:4px"></div>
<div class="t st3" style="left:1779px;top:6.80px;font-size:12.2px;line-height:16px;height:16px;color:#fff;letter-spacing:0.219px;">76</div>
<svg class="abs" style="left:1813px;top:6px;width:18px;height:18px;overflow:visible" viewBox="0 0 18 18" fill="none" stroke="#2f6a43" stroke-width="1.300" stroke-linejoin="round"><path d="M6.200 3.800l6.300-1.800 3 9.800-6.400 2.700z"/><path d="M6.200 3.800L2.500 12.600l2.300 1.600h4.200"/><path d="M5.600 7.500l-.8 6.500"/></svg>
<svg class="ic" viewBox="0 0 24 24" style="left:1835.70px;top:5.80px;width:16px;height:16px;color:#3f5f49;stroke-width:1.7;"><path d="M20 6 9 17l-5-5"/></svg>
<div class="t" style="left:1856.20px;top:7.30px;font-size:11.3px;line-height:16px;height:16px;color:#6f6f6f;">0</div>
<div class="t st4" style="left:1869.60px;top:7.30px;font-size:11.3px;line-height:16px;height:16px;color:#6f6f6f;letter-spacing:0.429px;">master</div>
</div>
</body>
</html>
